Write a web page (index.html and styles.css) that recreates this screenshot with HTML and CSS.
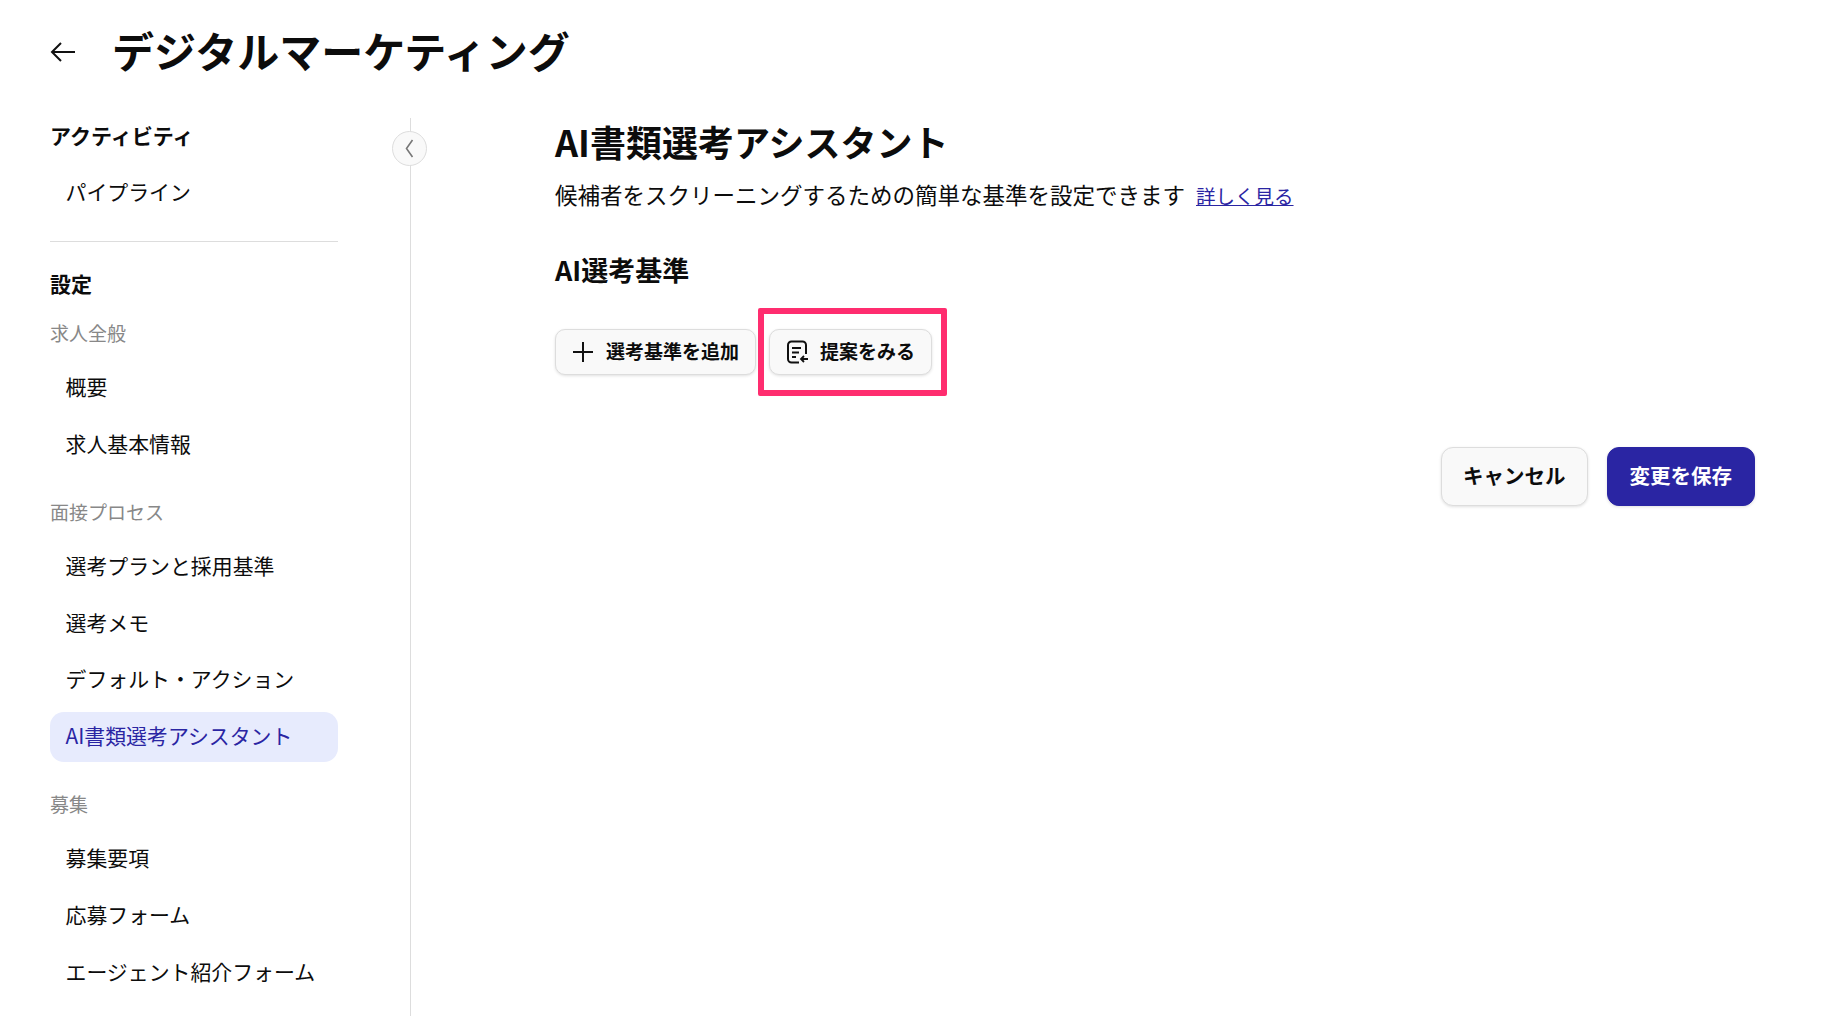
FILE: index.html
```html
<!DOCTYPE html>
<html lang="ja">
<head>
    <meta charset="UTF-8">
    <title>AI書類選考アシスタント</title>
    <link rel="stylesheet" href="styles.css">
</head>
<body>

<header class="page-header">
    <svg class="back-icon" width="28" height="28" viewBox="0 0 28 28" fill="none" stroke="#111" stroke-width="2">
        <path d="M26 14H3M12 5l-9 9 9 9"/>
    </svg>
    <h1 class="page-title">デジタルマーケティング</h1>
</header>

<div class="layout">
    <nav class="sidebar">
        <div class="nav-heading nav-heading-first">アクティビティ</div>
        <a class="nav-item">パイプライン</a>
        <hr class="nav-divider">
        <div class="nav-heading">設定</div>
        <div class="nav-group">求人全般</div>
        <a class="nav-item">概要</a>
        <a class="nav-item">求人基本情報</a>
        <div class="nav-group">面接プロセス</div>
        <a class="nav-item">選考プランと採用基準</a>
        <a class="nav-item">選考メモ</a>
        <a class="nav-item">デフォルト・アクション</a>
        <a class="nav-item active">AI書類選考アシスタント</a>
        <div class="nav-group">募集</div>
        <a class="nav-item">募集要項</a>
        <a class="nav-item">応募フォーム</a>
        <a class="nav-item">エージェント紹介フォーム</a>
        <button class="collapse-btn">
            <svg width="10" height="19" viewBox="0 0 10 19" fill="none" stroke="#777" stroke-width="1.6">
                <path d="M7.500 1L1.500 9.500l6 8.500"/>
            </svg>
        </button>
    </nav>

    <main class="content">
        <h2 class="content-title">AI書類選考アシスタント</h2>
        <p class="content-desc">候補者をスクリーニングするための簡単な基準を設定できます<a class="learn-more">詳しく見る</a></p>
        <h3 class="section-title">AI選考基準</h3>
        <div class="criteria-actions">
            <button class="btn btn-small">
                <svg width="22" height="22" viewBox="0 0 22 22" fill="none" stroke="#111" stroke-width="2">
                    <path d="M11 1v20M1 11h20"/>
                </svg>
                選考基準を追加
            </button>
            <div class="highlight-wrap">
                <button class="btn btn-small">
                    <svg width="22" height="24" viewBox="0 0 22 24" fill="none" stroke="#111" stroke-width="2">
                        <path d="M20 14V5a3.500 3.500 0 0 0-3.500-3.500h-11A3.500 3.500 0 0 0 2 5v14a3.500 3.500 0 0 0 3.500 3.500H13"/>
                        <path d="M6 8h9M6 12.500h7M6 17h4"/>
                        <path d="M22 19h-7M18 16l-3 3 3 3" stroke-width="1.800"/>
                    </svg>
                    提案をみる
                </button>
                <div class="highlight-box"></div>
            </div>
        </div>
        <div class="form-footer">
            <button class="btn btn-large">キャンセル</button>
            <button class="btn btn-large btn-primary">変更を保存</button>
        </div>
    </main>
</div>

</body>
</html>
```

FILE: styles.css
```css
* {
    box-sizing: border-box;
}
html, body {
    height: 100%;
}
body {
    margin: 0;
    height: 1016px;
    overflow: hidden;
    background-color: #fff;
    color: #0c0c0c;
    font-family: "Noto Sans CJK JP", "Noto Sans", sans-serif;
}
.page-header {
    display: flex;
    align-items: center;
    height: 118px;
    padding: 0 0 18px 49px;
    gap: 35px;
}
.back-icon {
    margin-top: 4px;
}
.page-title {
    margin: 0;
    font-size: 42px;
    font-weight: 700;
    line-height: 60px;
}
.layout {
    display: flex;
    height: 898px;
}
.sidebar {
    position: relative;
    flex: 0 0 411px;
    padding: 0 72px 0 50px;
    border-right: 1px solid #ddd;
}
.nav-heading {
    font-size: 21px;
    font-weight: 700;
    line-height: 36px;
    margin-top: 23px;
}
.nav-heading-first {
    margin-top: 0;
    margin-bottom: 16px;
    line-height: 34px;
}
.nav-group {
    font-size: 19px;
    color: #888;
    line-height: 28px;
    margin-top: 28px;
    margin-bottom: 16px;
}
.nav-heading + .nav-group {
    margin-top: 18px;
}
.nav-item {
    display: block;
    height: 50px;
    line-height: 46px;
    margin-bottom: 6.800px;
    padding-left: 15.500px;
    border-radius: 14px;
    font-size: 20.900px;
}
.nav-item.active {
    background-color: #e7ebfd;
    color: #2a25a3;
}
.nav-divider {
    border: 0;
    border-top: 1px solid #ddd;
    margin: 23px 0 0;
}
.collapse-btn {
    position: absolute;
    top: 13px;
    right: -17px;
    display: flex;
    align-items: center;
    justify-content: center;
    width: 35px;
    height: 35px;
    padding: 0;
    border: 1px solid #ddd;
    border-radius: 50%;
    background-color: #f9f9f9;
}
.content {
    flex: 1;
    padding: 0 83px 0 144px;
}
.content-title {
    margin: 0;
    font-size: 36px;
    font-weight: 700;
    line-height: 46px;
}
.content-desc {
    margin: 14px 0 0;
    font-size: 22.500px;
    line-height: 32px;
}
.learn-more {
    margin-left: 11px;
    font-size: 19.500px;
    color: #2a25a3;
    text-decoration: underline;
}
.section-title {
    margin: 39px 0 0;
    font-size: 27px;
    font-weight: 700;
    line-height: 38px;
}
.criteria-actions {
    display: flex;
    gap: 13px;
    margin-top: 40px;
}
.btn {
    display: inline-flex;
    align-items: center;
    border: 1px solid #ddd;
    background-color: #f9f9f9;
    color: #0c0c0c;
    font-family: inherit;
    font-weight: 700;
    box-shadow: 0 1px 3px rgba(0, 0, 0, 0.12);
}
.btn-small {
    height: 46px;
    padding: 0 16px 3px;
    gap: 12px;
    border-radius: 10px;
    font-size: 19px;
}
.btn-small svg {
    margin-top: 3px;
}
.highlight-wrap {
    position: relative;
}
.highlight-box {
    position: absolute;
    top: -21px;
    left: -11px;
    right: -15px;
    bottom: -21px;
    border: 6px solid #ff2d6f;
    border-radius: 2px;
}
.form-footer {
    display: flex;
    justify-content: flex-end;
    gap: 19px;
    margin-top: 72px;
}
.btn-large {
    height: 59px;
    padding: 0 21px 4px;
    border-radius: 12px;
    font-size: 20.500px;
}
.btn-primary {
    padding: 0 22px 4px;
    background-color: #2a25a3;
    border-color: #2a25a3;
    color: #fff;
}
```
